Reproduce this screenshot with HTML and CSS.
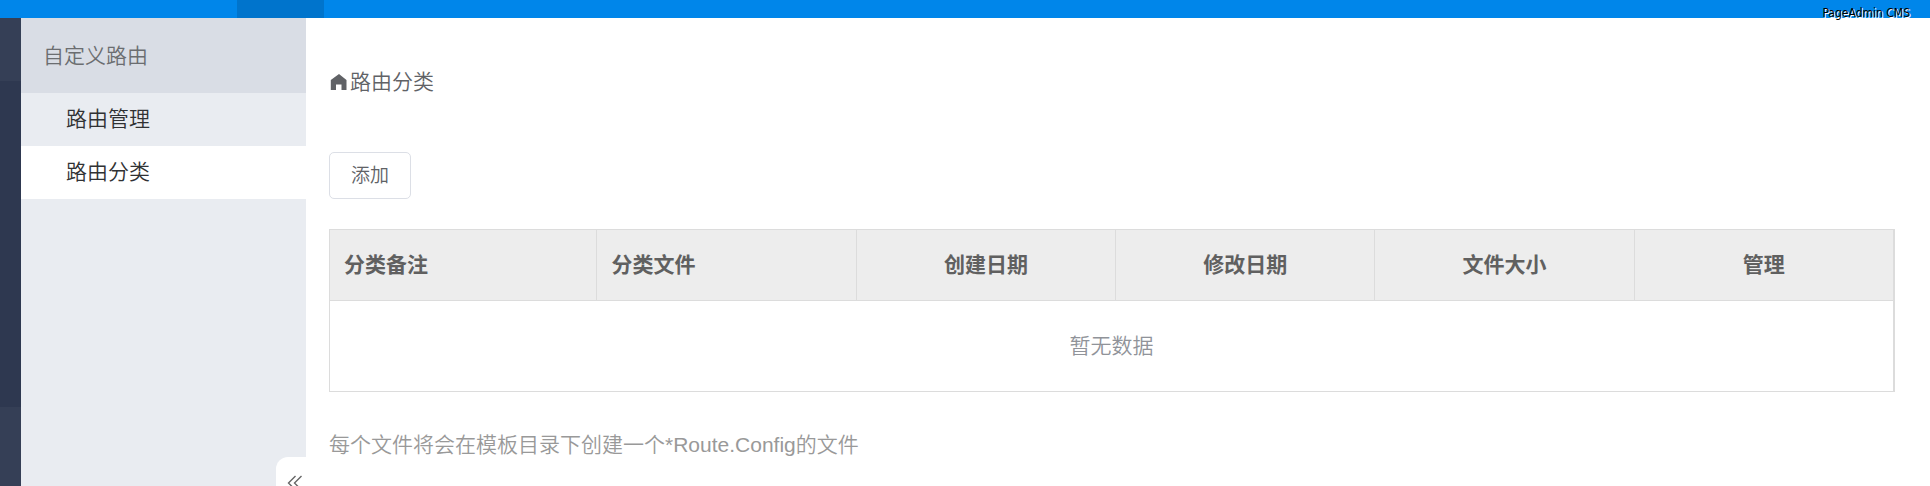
FILE: index.html
```html
<!DOCTYPE html>
<html lang="zh-CN">
<head>
<meta charset="utf-8">
<title>路由分类</title>
<link rel="stylesheet" href="styles.css">
</head>
<body>
<div class="app">
  <header class="topbar">
    <span class="topbar-active"></span>
    <span class="watermark">PageAdmin CMS</span>
  </header>
  <div class="body">
    <div class="rail"><div class="rail-group"></div></div>
    <aside class="sidebar">
      <h2 class="sidebar-title">自定义路由</h2>
      <nav class="menu">
        <a class="menu-item" href="#">路由管理</a>
        <a class="menu-item active" href="#">路由分类</a>
      </nav>
      <button class="collapse" type="button" aria-label="收起">
        <svg width="16" height="16" viewBox="0 0 16 16" fill="none" stroke="#666" stroke-width="1.4"><path d="M8.500 1 1.500 8l7 7M14.500 1l-7 7 7 7"/></svg>
      </button>
    </aside>
    <main class="main">
      <div class="crumb">
        <svg width="18" height="18" viewBox="0 0 18 18" fill="#606266"><path d="M10 1 1.800 7V17H7V11.500H12.500V17H17.500V7Z"/></svg>
        <span>路由分类</span>
      </div>
      <button class="add" type="button">添加</button>
      <table class="grid">
        <thead>
          <tr>
            <th class="first">分类备注</th>
            <th class="left">分类文件</th>
            <th>创建日期</th>
            <th>修改日期</th>
            <th>文件大小</th>
            <th>管理</th>
          </tr>
        </thead>
        <tbody>
          <tr><td colspan="6">暂无数据</td></tr>
        </tbody>
      </table>
      <p class="note">每个文件将会在模板目录下创建一个*Route.Config的文件</p>
    </main>
  </div>
</div>
</body>
</html>
```
FILE: styles.css
```css
* { box-sizing: border-box; }
body {
  margin: 0;
  background: #fff;
  color: #606266;
  font-family: "Liberation Sans", "Noto Sans CJK SC", sans-serif;
  font-size: 21px;
  font-weight: 350;
  line-height: 30px;
}
button { font-family: inherit; font-weight: inherit; }
.app { display: flex; flex-direction: column; height: 100vh; overflow: hidden; }
.topbar { position: relative; flex: none; height: 18px; padding-left: 237px; background: #0086ea; }
.topbar-active { display: block; width: 87px; height: 100%; background: #0074cc; }
.watermark {
  position: absolute;
  top: 6px;
  right: 20px;
  z-index: 2;
  color: #000;
  font-family: "DejaVu Sans Condensed", "DejaVu Sans", sans-serif;
  font-size: 12px;
  font-weight: 400;
  line-height: 15px;
  text-shadow: 1px 1px 0 #fff;
}
.body { display: flex; flex: 1; min-height: 0; }
.rail { flex: none; width: 21px; padding-top: 63px; background: #353f56; }
.rail-group { height: 326px; background: #2e3850; }
.sidebar { position: relative; flex: none; width: 285px; background: #e9ecf1; }
.sidebar-title { margin: 0; padding: 23px 22px 22px; background: #d9dde5; font-size: 21px; font-weight: 350; color: #6b6d70; }
.menu-item { display: block; height: 53px; padding: 11px 45px; color: #303133; text-decoration: none; }
.menu-item.active { background: #fff; }
.collapse {
  position: absolute;
  right: 0;
  bottom: -23px;
  display: flex;
  align-items: center;
  justify-content: center;
  width: 30px;
  height: 52px;
  padding: 0 0 0 8px;
  border: 0;
  border-radius: 12px 0 0 12px;
  background: #fff;
}
.main { flex: 1; min-width: 0; padding: 49px 35px 0 23px; }
.crumb { display: flex; align-items: center; gap: 3px; }
.add {
  display: block;
  margin-top: 55px;
  padding: 0 21px 4px;
  height: 47px;
  border: 1px solid #dcdfe6;
  border-radius: 5px;
  background: #fff;
  color: #606266;
  font-size: 19px;
}
.grid { width: 100%; margin-top: 30px; table-layout: fixed; border-collapse: separate; border-spacing: 0; border: 1px solid #dcdcdc; }
.grid th { height: 71px; padding: 0 14px; background: #ededed; border-right: 1px solid #dcdcdc; border-bottom: 1px solid #dcdcdc; color: #606060; font-weight: 700; }
.grid .first { width: 17.1%; text-align: left; }
.grid .left { text-align: left; }
.grid td { height: 90px; padding: 0; border-right: 1px solid #dcdcdc; color: #909399; text-align: center; }
.note { margin: 38px 0 0; color: #999; }
```
